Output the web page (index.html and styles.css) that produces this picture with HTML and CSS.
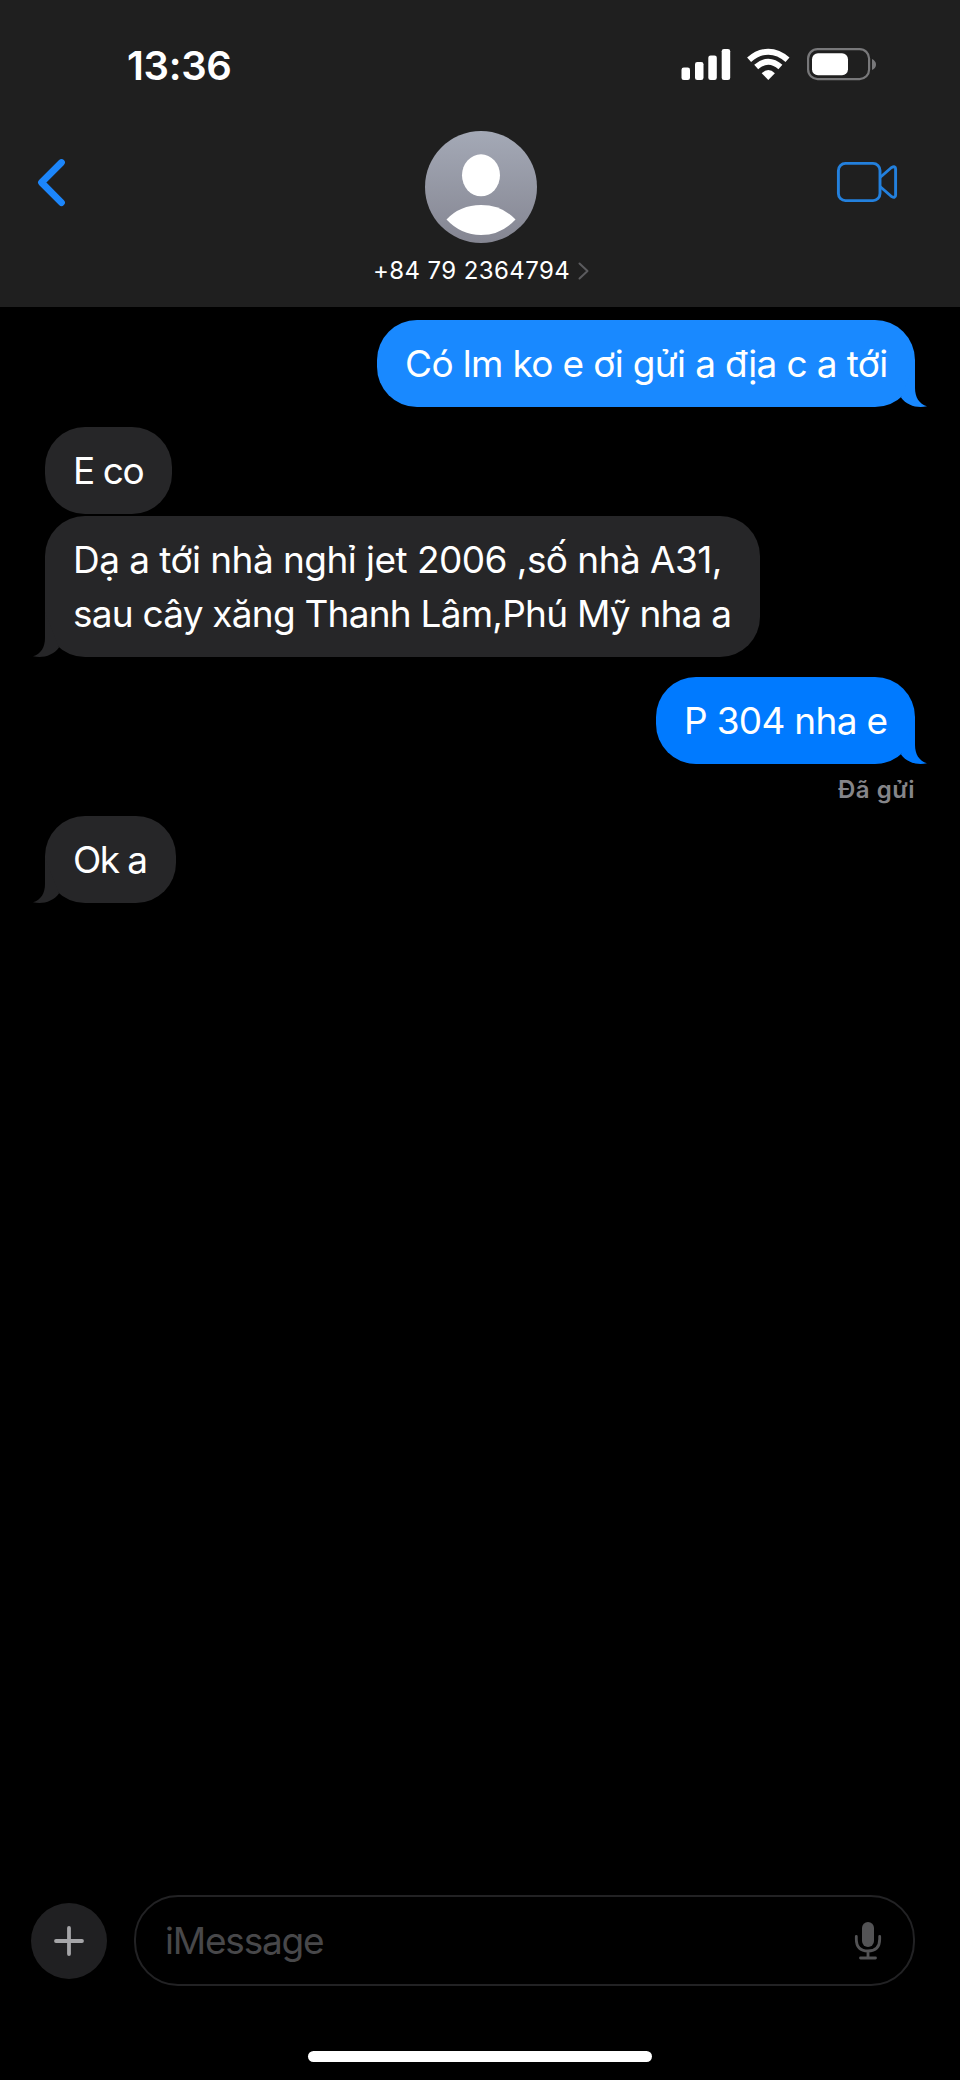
FILE: index.html
```html
<!DOCTYPE html>
<html lang="vi">
<head>
<meta charset="utf-8">
<title>Messages</title>
<link rel="stylesheet" href="styles.css">
</head>
<body>
<div class="phone">
  <header class="header">
    <div class="status">
      <span class="time">13:36</span>
      <svg class="status-icons" width="200" height="36" viewBox="0 0 200 36">
        <g fill="#fff">
          <rect x="3.5" y="21.5" width="8.5" height="12.5" rx="2.3"/>
          <rect x="17" y="16" width="8.5" height="18" rx="2.3"/>
          <rect x="30.300" y="9.500" width="8.500" height="24.500" rx="2.3"/>
          <rect x="43.700" y="3" width="8.500" height="31" rx="2.3"/>
          <path d="M90.300 34 L83.700 27.200 Q90.300 21 96.900 27.200 Z"/>
        </g>
        <g fill="none" stroke="#fff" stroke-width="5.900">
          <path d="M71.100 13.800 Q80 5.700 90.300 5.700 Q100.600 5.700 109.500 13.800"/>
          <path d="M78.200 21 Q84 15.700 90.300 15.700 Q96.600 15.700 102.400 21"/>
        </g>
        <rect x="130.100" y="3.100" width="61" height="30" rx="9.500" fill="none" stroke="#78787a" stroke-width="2.200"/>
        <rect x="134" y="7.300" width="36" height="22" rx="6" fill="#fff"/>
        <path d="M194 13 Q198 15 198 18.500 Q198 22 194 24 Z" fill="#78787a"/>
      </svg>
    </div>
    <div class="contact-bar">
      <svg class="back" width="36" height="52" viewBox="0 0 36 52"><path d="M27.500 6.500 L7.500 26.500 L27.500 46.700" fill="none" stroke="#1c86fb" stroke-width="6.800" stroke-linecap="round" stroke-linejoin="round"/></svg>
      <div class="contact">
        <svg width="112" height="112" viewBox="0 0 112 112">
          <defs>
            <linearGradient id="sky" x1="0" y1="0" x2="0" y2="1"><stop offset="0" stop-color="#a4a9b6"/><stop offset="1" stop-color="#858692"/></linearGradient>
          </defs>
          <circle cx="56" cy="56" r="56" fill="url(#sky)"/>
          <ellipse cx="56" cy="44.300" rx="19" ry="21" fill="#fff"/>
          <path d="M21.500 88.500 Q35 74 56 74 Q77 74 90.500 88.500 Q76 104 56 104 Q36 104 21.500 88.500Z" fill="#fff"/>
        </svg>
        <div class="number"><span>+84 79 2364794</span><svg width="11" height="18" viewBox="0 0 11 18"><path d="M1.500 1.500 L9.500 9 L1.500 16.500" fill="none" stroke="#5b5b5e" stroke-width="2" stroke-linecap="round" stroke-linejoin="round"/></svg></div>
      </div>
      <svg class="video" width="64" height="44" viewBox="0 0 64 44"><g fill="none" stroke="#2380dd" stroke-width="2.900" stroke-linejoin="round"><rect x="3.400" y="3.400" width="41.600" height="37.200" rx="7"/><path d="M45 17.500 L56.500 7.500 Q60.600 5.500 60.600 9 V35 Q60.600 38.500 56.500 36.500 L45 26.500"/></g></svg>
    </div>
  </header>

  <main class="thread">
    <div class="bubble sent faded">
      <span class="line l1">Có lm ko e ơi gửi a địa c a tới</span>
      <svg class="tail" viewBox="0 0 42 50"><path d="M30 5 V31 C30 40 34 47 42 49.300 C32 51.500 22 48.500 16 40.500 Z"/></svg>
    </div>
    <div class="bubble received first"><span class="line l2">E co</span></div>
    <div class="bubble received second">
      <span class="line l3">Dạ a tới nhà nghỉ jet 2006 ,số nhà A31,</span>
      <span class="line l4">sau cây xăng Thanh Lâm,Phú Mỹ nha a</span>
      <svg class="tail" viewBox="0 0 42 50"><path d="M30 5 V31 C30 40 34 47 42 49.300 C32 51.500 22 48.500 16 40.500 Z"/></svg>
    </div>
    <div class="bubble sent third">
      <span class="line l5">P 304 nha e</span>
      <svg class="tail" viewBox="0 0 42 50"><path d="M30 5 V31 C30 40 34 47 42 49.300 C32 51.500 22 48.500 16 40.500 Z"/></svg>
    </div>
    <div class="receipt">Đã gửi</div>
    <div class="bubble received last">
      <span class="line l6">Ok a</span>
      <svg class="tail" viewBox="0 0 42 50"><path d="M30 5 V31 C30 40 34 47 42 49.300 C32 51.500 22 48.500 16 40.500 Z"/></svg>
    </div>
  </main>

  <footer class="composer">
    <div class="entry">
      <div class="plus"><svg width="30" height="30" viewBox="0 0 30 30"><path d="M15 2 V28 M2 15 H28" stroke="#a5a5a8" stroke-width="3.800" stroke-linecap="round"/></svg></div>
      <div class="field">
        <span class="placeholder">iMessage</span>
        <svg width="28" height="40" viewBox="0 0 28 40"><rect x="8" y="1" width="12" height="25" rx="6" fill="#535355"/><path d="M2.300 15.500 V18 Q2.300 30 14 30 Q25.700 30 25.700 18 V15.500 M14 30 V37 M6.500 37 H21.500" fill="none" stroke="#535355" stroke-width="2.800" stroke-linecap="round"/></svg>
      </div>
    </div>
    <div class="home"></div>
  </footer>
</div>
</body>
</html>
```
FILE: styles.css
```css
* { box-sizing: border-box; }
body { margin: 0; background: #000; }
.phone {
  width: 960px; height: 2080px; background: #000; color: #fff;
  font-family: Inter, "Liberation Sans", sans-serif;
  display: flex; flex-direction: column; overflow: hidden;
}
svg { display: block; flex: none; }

.header { height: 307px; flex: none; background: #1f1f1f; }
.status { display: flex; justify-content: space-between; align-items: flex-start; height: 130px; padding: 46px 82px 0 127px; }
.time { font-size: 40px; font-weight: 600; line-height: 40px; letter-spacing: -0.3px; }
.contact-bar { display: flex; justify-content: space-between; align-items: flex-start; padding: 0 61px 0 34px; }
.back { margin-top: 26px; }
.contact { display: flex; flex-direction: column; align-items: center; width: 240px; margin-left: 57px; padding-top: 1px; }
.number { display: flex; align-items: center; gap: 8px; margin-top: 14px; font-size: 24px; line-height: 28px; letter-spacing: 0.4px; white-space: nowrap; }
.video { margin-top: 30px; }

.thread { flex: 1; display: flex; flex-direction: column; padding: 13px 45px 0; }
.bubble { position: relative; border-radius: 40px; padding: 17px 28px 16.500px; font-size: 37px; line-height: 53.500px; }
.line { display: block; white-space: nowrap; }
.l1 { letter-spacing: -0.65px; }
.l2 { letter-spacing: -1.4px; }
.l3 { letter-spacing: -0.55px; }
.l4 { letter-spacing: -0.77px; }
.l5 { letter-spacing: -0.7px; }
.l6 { letter-spacing: -1.6px; }
.sent { align-self: flex-end; background: #007aff; }
.received { align-self: flex-start; background: #262628; }
.faded { background: #1989ff; width: 538px; }
.first { width: 127px; margin-top: 20px; }
.second { width: 715px; margin-top: 2px; }
.third { width: 259px; margin-top: 20px; }
.last { width: 131px; margin-top: 12px; }
.tail { position: absolute; bottom: 0; right: -12px; width: 42px; height: 50px; fill: #007aff; }
.faded .tail { fill: #1989ff; }
.received .tail { right: auto; left: -12px; fill: #262628; transform: scaleX(-1); }
.receipt { align-self: flex-end; margin-top: 11px; height: 29px; line-height: 29px; font-size: 24px; font-weight: 600; letter-spacing: 0.5px; color: #858589; }

.composer { height: 186px; flex: none; display: flex; flex-direction: column; align-items: center; }
.entry { display: flex; align-items: center; gap: 27px; width: 960px; padding: 0 45px 0 31px; margin-top: 1px; }
.plus { width: 76px; height: 76px; border-radius: 50%; background: #202022; display: flex; align-items: center; justify-content: center; flex: none; }
.field { flex: 1; height: 91px; border: 2px solid #222224; border-radius: 44px; display: flex; align-items: center; justify-content: space-between; padding: 0 31px 0 29px; }
.placeholder { font-size: 37px; color: #48484a; letter-spacing: -1.2px; }
.home { width: 344px; height: 11px; border-radius: 6px; background: #fff; margin-top: 65px; }
```
